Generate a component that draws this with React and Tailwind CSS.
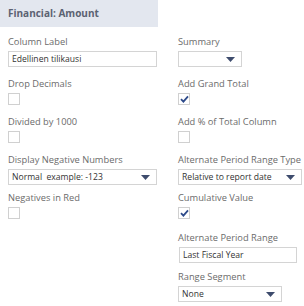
import React from "react";

const font = { fontFamily: '"Open Sans", "Liberation Sans", sans-serif' };

function Label({ children }) {
  return <div className="text-[9.3px] leading-[14px] text-[#6b6b6b] whitespace-nowrap">{children}</div>;
}

function Checkbox({ checked }) {
  return (
    <div className="mt-[2px] w-[12px] h-[12px] border border-[#d0d0d0] bg-white flex items-center justify-center">
      {checked && (
        <svg width="9" height="8" viewBox="0 0 9 8">
          <path d="M1 4.2 L3.4 6.6 L8 1.4" fill="none" stroke="#2d4a8a" strokeWidth="1.8" />
        </svg>
      )}
    </div>
  );
}

function TextInput({ value, w }) {
  return (
    <div className={`mt-[2px] h-[16px] ${w} border border-[#d4d4d4] bg-white flex items-center px-[3px] text-[8.6px] text-[#333] whitespace-nowrap`}>
      {value}
    </div>
  );
}

function Select({ value, w }) {
  return (
    <div className={`mt-[2px] h-[16px] ${w} border border-[#d4d4d4] bg-white flex items-center justify-between pl-[3px] pr-[6px] text-[8.6px] text-[#333] whitespace-pre`}>
      <span>{value}</span>
      <svg width="9" height="5" viewBox="0 0 9 5">
        <path d="M0 0 H9 L4.5 5 Z" fill="#3e4c6d" />
      </svg>
    </div>
  );
}

function Field({ h, label, children }) {
  return (
    <div className={h}>
      <Label>{label}</Label>
      {children}
    </div>
  );
}

export default function App() {
  return (
    <div className="w-[304px] h-[306px] bg-white overflow-hidden" style={font}>
      <div className="w-[158px] h-[27px] bg-[#e3e7ef] flex items-center pl-[8px] text-[10px] font-bold text-[#5b6272]">
        Financial: Amount
      </div>
      <div className="flex pt-[8px]">
        <div className="w-[178px] pl-[8px]">
          <Field h="h-[42px]" label="Column Label">
            <TextInput value="Edellinen tilikausi" w="w-[149px]" />
          </Field>
          <Field h="h-[38px]" label="Drop Decimals">
            <Checkbox />
          </Field>
          <Field h="h-[38px]" label="Divided by 1000">
            <Checkbox />
          </Field>
          <Field h="h-[38px]" label="Display Negative Numbers">
            <Select value="Normal  example: -123" w="w-[149px]" />
          </Field>
          <Field h="h-[40px]" label="Negatives in Red">
            <Checkbox />
          </Field>
        </div>
        <div className="w-[126px]">
          <Field h="h-[42px]" label="Summary">
            <Select value="" w="w-[64px]" />
          </Field>
          <Field h="h-[38px]" label="Add Grand Total">
            <Checkbox checked />
          </Field>
          <Field h="h-[38px]" label="Add % of Total Column">
            <Checkbox />
          </Field>
          <Field h="h-[38px]" label="Alternate Period Range Type">
            <Select value="Relative to report date" w="w-[124px]" />
          </Field>
          <Field h="h-[40px]" label="Cumulative Value">
            <Checkbox checked />
          </Field>
          <Field h="h-[39px]" label="Alternate Period Range">
            <div className="pl-[1px]">
              <TextInput value="Last Fiscal Year" w="w-[118px]" />
            </div>
          </Field>
          <Field h="h-[36px]" label="Range Segment">
            <Select value="None" w="w-[104px]" />
          </Field>
        </div>
      </div>
    </div>
  );
}
